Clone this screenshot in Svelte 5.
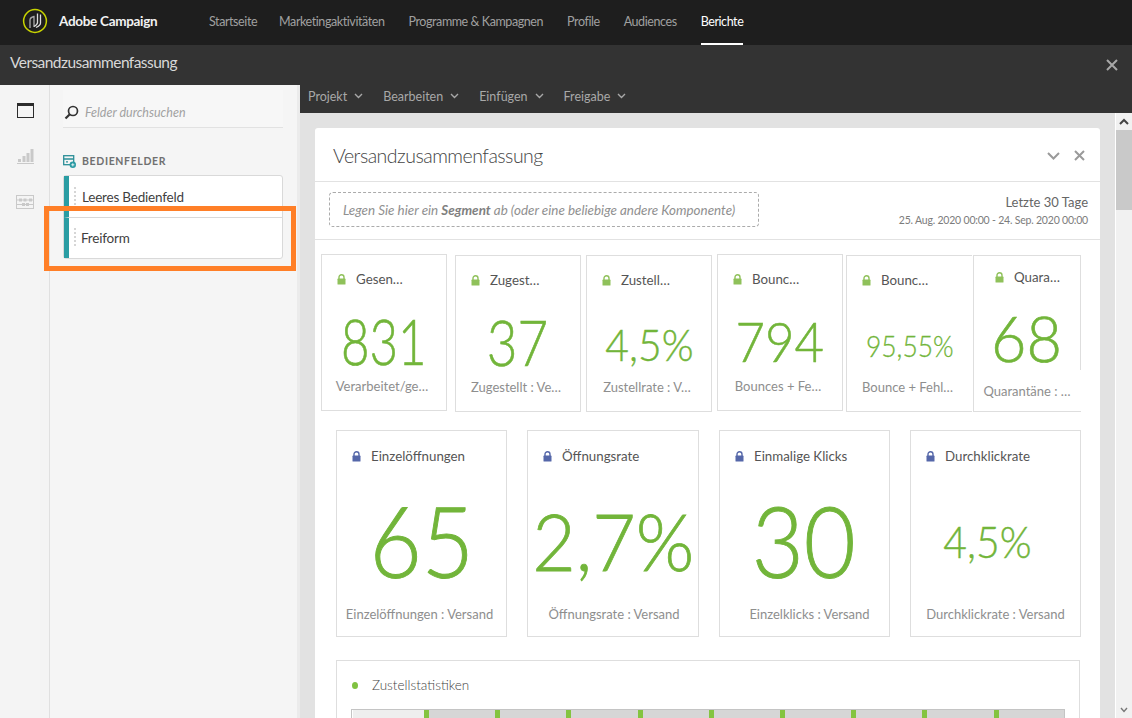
<script>
  const nav = ['Startseite', 'Marketingaktivitäten', 'Programme & Kampagnen', 'Profile', 'Audiences', 'Berichte'];
  const menus = ['Projekt', 'Bearbeiten', 'Einfügen', 'Freigabe'];
  const small = [
    { t: 'Gesen…', v: '831', s: 'Verarbeitet/ge…', size: 63, sx: 0.78, dy: 7, dx: 0 },
    { t: 'Zugest…', v: '37', s: 'Zugestellt : Ve…', size: 63, sx: 0.84, dy: 7, dx: 0 },
    { t: 'Zustell…', v: '4,5%', s: 'Zustellrate : V…', size: 43, sx: 0.95, dy: 9.5, dx: 0 },
    { t: 'Bounc…', v: '794', s: 'Bounces + Fe…', size: 56, sx: 0.91, dy: 7, dx: 0 },
    { t: 'Bounc…', v: '95,55%', s: 'Bounce + Fehl…', size: 30, sx: 0.88, dy: 10, dx: 0 },
    { t: 'Quara…', v: '68', s: 'Quarantäne : …', size: 63, sx: 0.97, dy: 1.5, dx: 0 }
  ];
  const large = [
    { t: 'Einzelöffnungen', v: '65', s: 'Einzelöffnungen : Versand', size: 98, sx: 0.92, dy: 4, dx: 0 },
    { t: 'Öffnungsrate', v: '2,7%', s: 'Öffnungsrate : Versand', size: 79, sx: 0.95, dy: 4, dx: 0 },
    { t: 'Einmalige Klicks', v: '30', s: 'Einzelklicks : Versand', size: 98, sx: 0.915, dy: 4, dx: -1 },
    { t: 'Durchklickrate', v: '4,5%', s: 'Durchklickrate : Versand', size: 43, sx: 0.95, dy: 5, dx: -8 }
  ];
  const ticks = Array.from({ length: 9 });
</script>

{#snippet lock()}
  <svg class="lock" viewBox="0 0 9 11" width="9" height="11" aria-hidden="true">
    <path d="M2 5V3.2a2.5 2.5 0 0 1 5 0V5" fill="none" stroke="currentColor" stroke-width="1.4" />
    <rect x="0.5" y="4.6" width="8" height="6" rx="0.6" fill="currentColor" />
  </svg>
{/snippet}

{#snippet chevron()}
  <svg class="chev" viewBox="0 0 9 6" width="9" height="6" aria-hidden="true">
    <path d="M1 1l3.5 3.5L8 1" fill="none" stroke="currentColor" stroke-width="1.4" />
  </svg>
{/snippet}

{#snippet card(c, tone)}
  <div class="card">
    <div class="card-title {tone}">{@render lock()}<span>{c.t}</span></div>
    <div class="value"><span style:font-size="{c.size}px" style:--sx={c.sx} style:--dy="{c.dy}px" style:--dx="{c.dx}px">{c.v}</span></div>
    <div class="sub">{c.s}</div>
  </div>
{/snippet}

<div class="app">
  <header class="topbar">
    <svg class="logo" viewBox="0 0 26 26" width="26" height="26" aria-hidden="true">
      <circle cx="13" cy="13" r="11.4" fill="none" stroke="#c8d400" stroke-width="1.5" />
      <path d="M8 20v-8q0-2.5 4-3.500v10.500" fill="none" stroke="#a9a9a9" stroke-width="1.3" />
      <path d="M15.500 5.500v9q0 2-3.500 4M18.500 6.500v8.500q0 2.500-4.500 4.500" fill="none" stroke="#dcdcdc" stroke-width="1.3" />
    </svg>
    <span class="brand">Adobe Campaign</span>
    <nav class="nav">
      {#each nav as item}
        <span class="nav-item" class:active={item === 'Berichte'}>{item}</span>
      {/each}
    </nav>
  </header>

  <div class="titlebar">
    <span class="title">Versandzusammenfassung</span>
    <svg class="close" viewBox="0 0 12 12" width="12" height="12" aria-hidden="true">
      <path d="M1 1l10 10M11 1L1 11" stroke="#a8a8a8" stroke-width="2" />
    </svg>
  </div>

  <div class="main">
    <aside class="rail">
      <svg viewBox="0 0 17 15" width="17" height="15" aria-hidden="true">
        <rect x="0.5" y="1" width="16" height="13.500" fill="none" stroke="#2c2c2c" />
        <rect x="0" y="0" width="17" height="3" fill="#2c2c2c" />
      </svg>
      <svg viewBox="0 0 17 16" width="17" height="16" aria-hidden="true">
        <path d="M0 15.500h17" stroke="#c9c9c9" />
        <path d="M1 11h3v3H1zM5.500 8h3v6h-3zM9.500 5h3v9h-3zM13.500 1h3v13h-3z" fill="#c9c9c9" />
      </svg>
      <svg class="abacus" viewBox="0 0 18 14" width="18" height="14" aria-hidden="true">
        <rect x="0.5" y="0.5" width="17" height="13" fill="none" stroke="#c9c9c9" />
        <path d="M0 5h18M0 9.500h18" stroke="#c9c9c9" />
        <path d="M3 3.500h3v3H3zM7.500 3.500h3v3h-3zM13 3.500h3v3h-3zM6 8h3v3H6zM10 8h3v3h-3z" fill="#c9c9c9" />
      </svg>
    </aside>

    <aside class="panel">
      <div class="search">
        <svg viewBox="0 0 15 15" width="15" height="15" aria-hidden="true">
          <circle cx="9" cy="6" r="4.500" fill="none" stroke="#333" stroke-width="1.7" />
          <path d="M5.800 9.200L1.500 13.500" stroke="#333" stroke-width="2.200" />
        </svg>
        <span>Felder durchsuchen</span>
      </div>
      <div class="section">
        <svg viewBox="0 0 13 13" width="13" height="13" aria-hidden="true">
          <rect x="0.7" y="0.7" width="10" height="9" fill="none" stroke="#2b8f98" stroke-width="1.3" />
          <path d="M0.7 4h10M3 6.800h2" stroke="#2b8f98" stroke-width="1.3" />
          <circle cx="9.800" cy="9.800" r="3.200" fill="#2b9aa3" />
          <path d="M8.200 9.800h3.200M9.800 8.200v3.200" stroke="#fff" stroke-width="0.8" />
        </svg>
        <span>BEDIENFELDER</span>
      </div>
      <div class="list">
        <div class="item"><i class="dots"></i><span class="first">Leeres Bedienfeld</span></div>
        <div class="item"><i class="dots"></i><span>Freiform</span></div>
      </div>
    </aside>

    <section class="workspace">
      <div class="toolbar">
        {#each menus as menu}
          <span class="menu">{menu}{@render chevron()}</span>
        {/each}
      </div>
      <div class="body">
        <div class="canvas">
          <article class="board">
            <div class="board-head">
              <h1>Versandzusammenfassung</h1>
              <svg viewBox="0 0 13 8" width="13" height="8" aria-hidden="true">
                <path d="M1 1l5.500 5.500L12 1" fill="none" stroke="#9a9a9a" stroke-width="2" />
              </svg>
              <svg viewBox="0 0 11 11" width="11" height="11" aria-hidden="true">
                <path d="M1 1l9 9M10 1l-9 9" stroke="#9a9a9a" stroke-width="2" />
              </svg>
            </div>
            <div class="segment-row">
              <div class="dropzone"><span>Legen Sie hier ein <b>Segment</b> ab (oder eine beliebige andere Komponente)</span></div>
              <div class="range">
                <div>Letzte 30 Tage</div>
                <small>25. Aug. 2020 00:00 - 24. Sep. 2020 00:00</small>
              </div>
            </div>

            <div class="row-small">
              {#each small as c}
                {@render card(c, 'green')}
              {/each}
            </div>

            <div class="row-large">
              {#each large as c}
                {@render card(c, 'blue')}
              {/each}
            </div>

            <div class="stats">
              <div class="stats-title"><i></i>Zustellstatistiken</div>
              <div class="bar">
                <div class="seg first"></div>
                {#each ticks as _}
                  <div class="seg"></div>
                {/each}
              </div>
            </div>
          </article>
        </div>
        <div class="scrollbar">
          <div class="btn">
            <svg viewBox="0 0 10 7" width="10" height="7" aria-hidden="true"><path d="M1 6l4-4 4 4" fill="none" stroke="#444" stroke-width="2" /></svg>
          </div>
          <div class="thumb"></div>
          <div class="track"></div>
          <div class="btn down">
            <svg viewBox="0 0 8 6" width="8" height="6" aria-hidden="true"><path d="M1 1l3 3.500L7 1" fill="none" stroke="#777" stroke-width="1.4" /></svg>
          </div>
        </div>
      </div>
    </section>

    <div class="highlight"></div>
  </div>
</div>

<style>
  :global(body) {
    margin: 0;
    background: #fff;
  }
  .app {
    width: 1132px;
    height: 718px;
    overflow: hidden;
    display: flex;
    flex-direction: column;
    font-family: Lato, "Open Sans", "Liberation Sans", sans-serif;
    color: #4b4b4b;
  }
  .topbar {
    height: 45px;
    flex: none;
    box-sizing: border-box;
    background: #1e1e1e;
    display: flex;
    align-items: center;
    padding-left: 22px;
    padding-bottom: 3px;
  }
  .brand {
    margin-left: 11px;
    width: 150px;
    color: #f2f2f2;
    font-size: 13.5px;
    font-weight: 700;
    letter-spacing: -0.3px;
  }
  .nav {
    display: flex;
    gap: 24px;
    margin-bottom: -3px;
    align-self: stretch;
  }
  .nav-item {
    display: flex;
    align-items: center;
    padding-bottom: 1px;
    box-sizing: border-box;
    color: #a0a0a0;
    font-size: 12.5px;
    letter-spacing: -0.42px;
    border-bottom: 2px solid transparent;
  }
  .nav-item:first-child {
    margin-right: -2px;
  }
  .nav-item.active {
    color: #fff;
    border-bottom-color: #fff;
  }
  .titlebar {
    height: 40px;
    flex: none;
    background: #333;
    display: flex;
    align-items: center;
    justify-content: space-between;
    padding: 0 14px 6px 10px;
    box-sizing: border-box;
  }
  .title {
    color: #d8d8d8;
    font-size: 15.5px;
    letter-spacing: -0.55px;
  }
  .close {
    margin-top: 6px;
  }
  .main {
    flex: 1;
    min-height: 0;
    display: flex;
    position: relative;
  }
  .rail {
    flex: none;
    box-sizing: border-box;
    background: #f4f4f4;
    border-right: 1px solid #e0e0e0;
    width: 50px;
    display: flex;
    flex-direction: column;
    align-items: center;
    padding: 18px 0 0 1px;
    gap: 30px;
  }
  .abacus {
    margin-top: 1px;
  }
  .panel {
    width: 250px;
    flex: none;
    box-sizing: border-box;
    background: #f5f5f5;
    border-right: 3px solid #ebebeb;
    padding: 5px 14px 0 13px;
  }
  .search {
    height: 38px;
    box-sizing: border-box;
    background: #f7f7f7;
    border-bottom: 1px solid #e2e2e2;
    display: flex;
    align-items: center;
    gap: 6px;
    padding: 8px 0 0 1px;
    color: #a2a2a2;
    font-size: 12.5px;
    font-style: italic;
  }
  .section {
    display: flex;
    align-items: center;
    gap: 6px;
    margin-top: 26px;
    height: 14px;
    color: #707070;
    font-size: 10.5px;
    font-weight: 700;
    letter-spacing: 0.65px;
  }
  .list {
    margin-top: 7px;
    border: 1px solid #d9d9d9;
    border-radius: 3px;
    background: #fff;
  }
  .item {
    height: 41px;
    display: flex;
    align-items: center;
    box-sizing: border-box;
    border-left: 5px solid #2a9da3;
    color: #3f3f3f;
    font-size: 13.5px;
    letter-spacing: -0.2px;
    padding-left: 5px;
    gap: 5px;
  }
  .item + .item {
    height: 41px;
    border-top: 1px solid #d9d9d9;
  }
  .first {
    margin-left: 1px;
  }
  .dots {
    width: 2px;
    height: 20px;
    background: repeating-linear-gradient(#d6d6d6 0 2px, transparent 2px 4px);
  }
  .workspace {
    flex: 1;
    min-width: 0;
    display: flex;
    flex-direction: column;
  }
  .toolbar {
    height: 28px;
    flex: none;
    background: #333;
    display: flex;
    align-items: center;
    padding-left: 8px;
    gap: 20px;
    padding-bottom: 6px;
    box-sizing: border-box;
  }
  .menu {
    color: #a8a8a8;
    font-size: 12.5px;
    display: flex;
    align-items: center;
    gap: 7px;
  }
  .body {
    flex: 1;
    min-height: 0;
    display: flex;
  }
  .canvas {
    flex: 1;
    min-width: 0;
    background: #e2e2e2;
    padding: 15px 15px 0;
    overflow: hidden;
  }
  .board {
    background: #fff;
    border-radius: 3px 3px 0 0;
    height: 640px;
  }
  .board-head {
    height: 54px;
    box-sizing: border-box;
    border-bottom: 1px solid #e2e2e2;
    display: flex;
    align-items: center;
    padding: 2px 15px 0 18px;
    gap: 14px;
  }
  h1 {
    flex: 1;
    margin: 0;
    font-size: 19.5px;
    font-weight: 300;
    letter-spacing: -0.5px;
    color: #444;
  }
  .segment-row {
    height: 58px;
    box-sizing: border-box;
    border-bottom: 1px solid #e2e2e2;
    display: flex;
    align-items: center;
    justify-content: space-between;
    padding: 0 12px 2px 14px;
  }
  .dropzone {
    width: 430px;
    height: 35px;
    box-sizing: border-box;
    border: 1px dashed #ababab;
    border-radius: 4px;
    display: flex;
    align-items: center;
    padding-left: 13px;
    font-size: 13.4px;
    font-style: italic;
    color: #909090;
    white-space: nowrap;
  }
  .dropzone b {
    color: #808080;
  }
  .range {
    text-align: right;
    font-size: 13px;
    color: #666;
    line-height: 18px;
    padding-top: 2px;
  }
  .range small {
    display: block;
    font-size: 10.5px;
    letter-spacing: -0.2px;
    color: #7c7c7c;
  }
  .row-small {
    display: flex;
    align-items: flex-start;
    padding: 14px 0 0 6px;
  }
  .row-large {
    display: flex;
    gap: 20px;
    padding: 18px 0 0 21px;
  }
  .card {
    box-sizing: border-box;
    border: 1px solid #dedede;
    width: 126px;
    height: 157px;
    background: #fff;
    display: flex;
    flex-direction: column;
    position: relative;
  }
  .row-small .card:nth-child(2) { margin: 1px 0 0 8px; }
  .row-small .card:nth-child(3) { margin: 1px 0 0 5px; }
  .row-small .card:nth-child(4) { margin: 0 0 0 5px; }
  .row-small .card:nth-child(5) { margin: 1px 0 0 3px; border-right: 0; }
  .row-small .card:nth-child(6) { margin: 1px 0 0 1px; width: 108px; }
  .row-small .card:nth-child(6)::after {
    content: '';
    position: absolute;
    right: -1px;
    top: 114px;
    bottom: 0;
    width: 1px;
    background: #fff;
  }
  .row-small .sub {
    padding-right: 4px;
  }
  .row-small .card:nth-child(6) .sub {
    margin-bottom: 11px;
    padding-right: 0;
  }
  .row-small .card:nth-child(6) .card-title {
    padding-top: 11px;
    padding-left: 21px;
  }
  .row-large .card {
    width: 171px;
    height: 207px;
  }
  .row-large .card:nth-child(2) {
    width: 172px;
  }
  .card-title {
    display: flex;
    align-items: center;
    gap: 10px;
    padding: 14px 0 0 15px;
    height: 20px;
    flex: none;
    font-size: 13.3px;
    color: #555;
    white-space: nowrap;
  }
  .row-large .card-title {
    padding: 15px 0 0 15px;
  }
  .lock {
    flex: none;
  }
  .green .lock {
    color: #8fc15a;
  }
  .blue .lock {
    color: #5567a9;
  }
  .value {
    flex: 1;
    min-height: 0;
    display: flex;
    align-items: center;
    justify-content: center;
    color: #72b53a;
    font-weight: 300;
    line-height: 1;
    white-space: nowrap;
  }
  .value span {
    display: inline-block;
    transform: translate(var(--dx), var(--dy)) scaleX(var(--sx));
    -webkit-text-stroke: 0.01em #72b53a;
  }
  .sub {
    flex: none;
    height: 17px;
    margin-bottom: 15px;
    text-align: center;
    font-size: 13px;
    color: #8e8e8e;
    white-space: nowrap;
  }
  .row-large .sub {
    margin-bottom: 13px;
  }
  .row-large .card:nth-child(1) .sub {
    padding-right: 4px;
  }
  .row-large .card:nth-child(2) .sub {
    padding-left: 2px;
  }
  .row-large .card:nth-child(3) .sub {
    padding-left: 10px;
  }
  .stats {
    margin: 23px 20px 0 21px;
    border: 1px solid #dedede;
    border-bottom: 0;
    height: 70px;
    padding: 0 14px;
  }
  .stats-title {
    height: 48px;
    display: flex;
    align-items: center;
    gap: 14px;
    padding-left: 1px;
    font-size: 13.5px;
    font-weight: 300;
    color: #444;
  }
  .stats-title i {
    width: 6px;
    height: 7px;
    border-radius: 50%;
    background: #80c241;
  }
  .bar {
    display: flex;
    height: 20px;
    border: 1px solid #c4c4c4;
    border-bottom: 0;
  }
  .seg {
    flex: none;
    width: 71.2px;
    box-sizing: border-box;
    background: #d6d6d6;
    border-left: 5px solid #84c440;
  }
  .seg:last-child {
    flex: 1;
  }
  .seg.first {
    width: 71px;
    background: #eee;
    border-left: 0;
  }
  .scrollbar {
    width: 17px;
    flex: none;
    box-sizing: border-box;
    border-left: 1px solid #fff;
    background: #f1f1f1;
    display: flex;
    flex-direction: column;
  }
  .btn {
    height: 17px;
    flex: none;
    display: flex;
    align-items: center;
    justify-content: center;
  }
  .thumb {
    height: 80px;
    flex: none;
    background: #c9c9c9;
  }
  .track {
    flex: 1;
  }
  .highlight {
    position: absolute;
    left: 44px;
    top: 121px;
    width: 252px;
    height: 65px;
    box-sizing: border-box;
    border: 5px solid #ff7f27;
    pointer-events: none;
  }
</style>
